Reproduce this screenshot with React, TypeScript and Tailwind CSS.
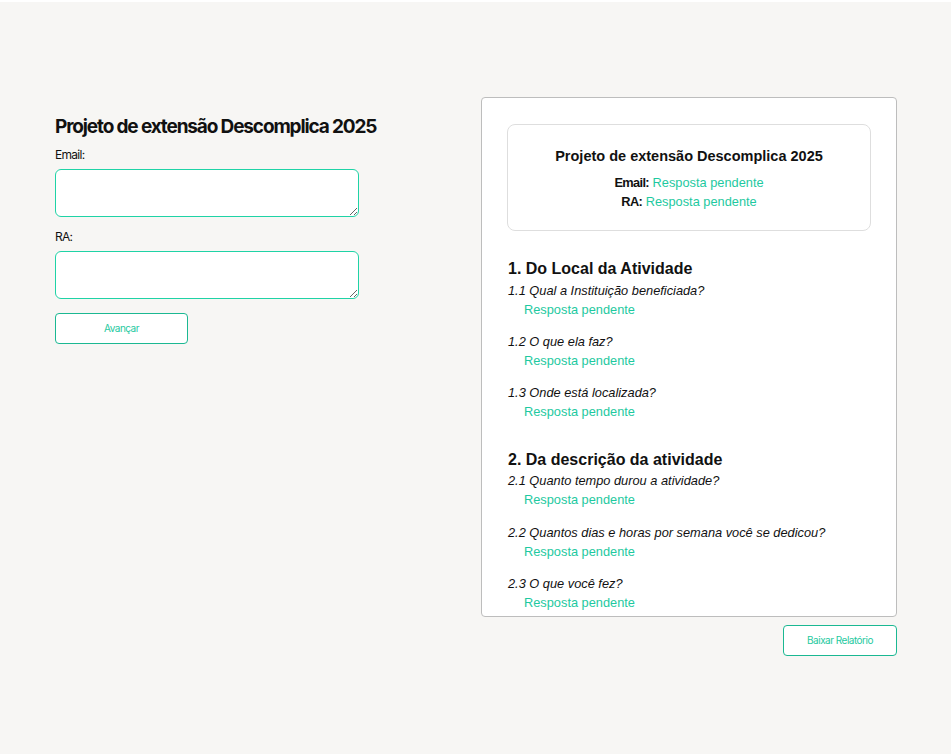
import React from "react";

const teal = "text-[#1ec9a0]";

const Question = ({ q, gap = "mb-[13px]" }: { q: string; gap?: string }) => {
    return (
        <div className={gap}>
            <p className="italic text-[12.8px] leading-[19px] text-[#111]">{q}</p>
            <p className={`text-[12.8px] leading-[19px] ${teal} pl-4`}>Resposta pendente</p>
        </div>
    );
};

const App = () => {
    return (
        <div className="w-full h-[755px] bg-white pt-[2px] overflow-hidden">
            <div className="h-[752px] bg-[#f7f6f4] flex flex-row pt-[95px]">
                {/* formulario */}
                <div className="w-[481px] pl-[55px] pt-[16px] font-['Inter',sans-serif]">
                    <h1 className="text-[19px] leading-[28px] font-bold tracking-[-0.06em] text-[#111]">
                        Projeto de extensão Descomplica 2025
                    </h1>
                    <label className="block mt-[6px] text-[12px] leading-[16px] tracking-[-0.06em] text-[#111]">Email:</label>
                    <textarea className="block mt-[6px] w-[304px] h-[48px] bg-white border border-[#1fd3a6] rounded-[6px] outline-none" />
                    <label className="block mt-[12px] text-[12px] leading-[16px] tracking-[-0.06em] text-[#111]">RA:</label>
                    <textarea className="block mt-[6px] w-[304px] h-[48px] bg-white border border-[#1fd3a6] rounded-[6px] outline-none" />
                    <button className="mt-[14px] w-[133px] h-[31px] bg-white border border-[#1bb892] rounded-[4px] text-[10px] tracking-[-0.05em] text-[#1ec9a0]">
                        Avançar
                    </button>
                </div>

                {/* relatorio */}
                <div className="flex flex-col items-end">
                    <div className="w-[416px] h-[520px] bg-white border border-[#bdbdbd] rounded-[4px] overflow-hidden px-[25px] pt-[26px] font-['Liberation_Sans',Arial,sans-serif]">
                        <div className="border border-[#dedede] rounded-[8px] h-[107px] flex flex-col items-center pt-[21px]">
                            <h2 className="text-[14.5px] leading-[20px] font-bold text-[#111]">Projeto de extensão Descomplica 2025</h2>
                            <p className="mt-[7px] text-[12.8px] leading-[19px]">
                                <span className="font-bold tracking-[-0.05em] text-[#111]">Email:</span>{" "}
                                <span className={teal}>Resposta pendente</span>
                            </p>
                            <p className="text-[12.8px] leading-[19px]">
                                <span className="font-bold tracking-[-0.05em] text-[#111]">RA:</span>{" "}
                                <span className={teal}>Resposta pendente</span>
                            </p>
                        </div>

                        <div className="pl-px">
                            <h3 className="mt-[27px] mb-[1px] text-[16px] leading-[22px] font-bold text-[#111]">1. Do Local da Atividade</h3>
                            <Question q="1.1 Qual a Instituição beneficiada?" />
                            <Question q="1.2 O que ela faz?" />
                            <Question q="1.3 Onde está localizada?" />

                            <h3 className="mt-[28px] text-[16px] leading-[22px] font-bold text-[#111]">2. Da descrição da atividade</h3>
                            <Question q="2.1 Quanto tempo durou a atividade?" gap="mb-[14px]" />
                            <Question q="2.2 Quantos dias e horas por semana você se dedicou?" />
                            <Question q="2.3 O que você fez?" />
                        </div>
                    </div>
                    <button className="mt-[8px] w-[114px] h-[31px] bg-white border border-[#1bb892] rounded-[4px] text-[10px] tracking-[-0.05em] text-[#1ec9a0] font-['Inter',sans-serif]">
                        Baixar Relatório
                    </button>
                </div>
            </div>
        </div>
    );
};

export default App;
